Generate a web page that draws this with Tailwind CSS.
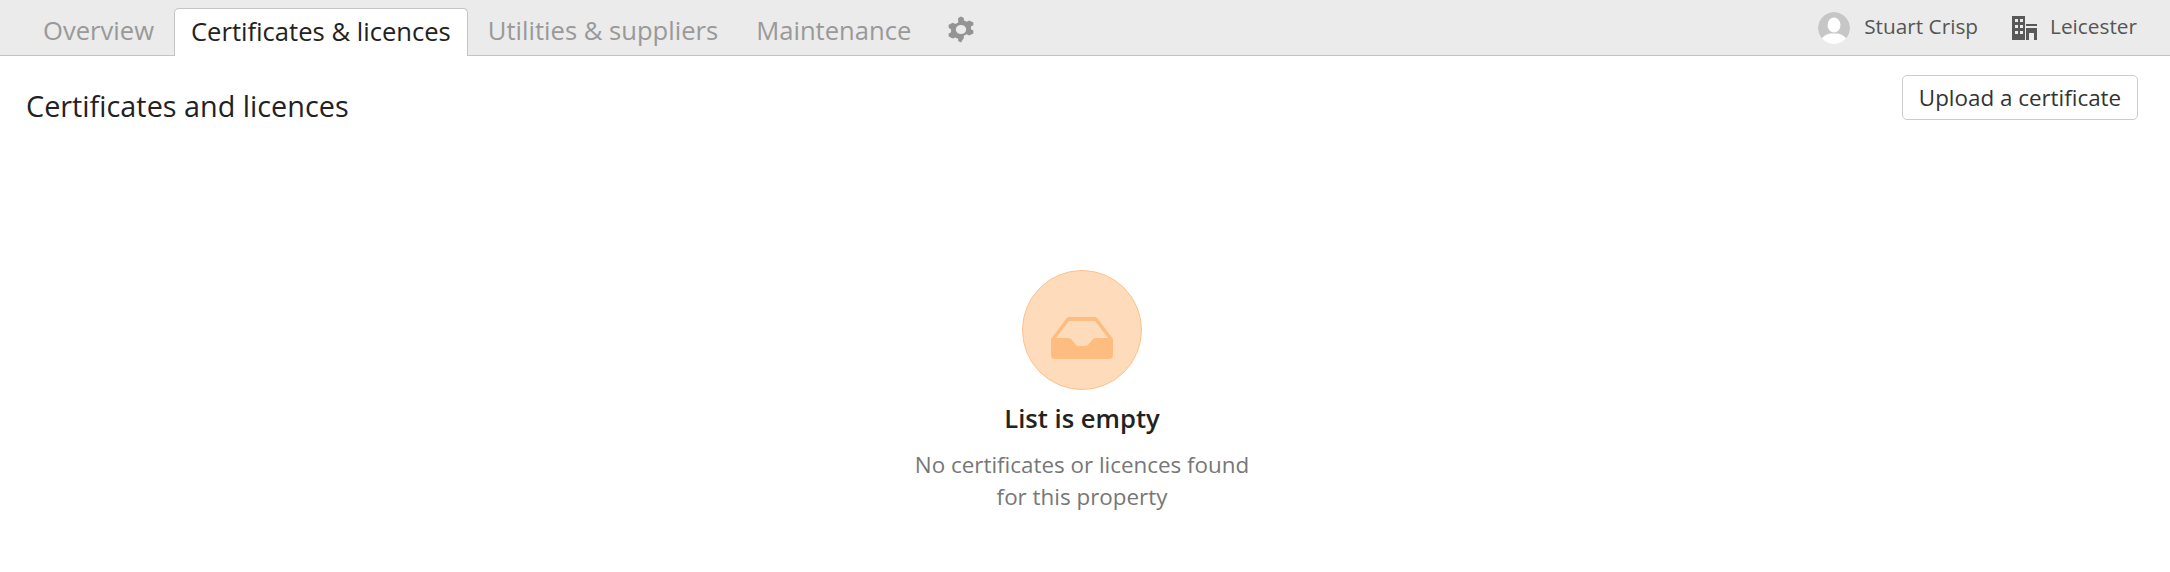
<!DOCTYPE html>
<html lang="en">
<head>
    <meta charset="UTF-8">
    <title>Certificates and licences</title>
    <script src="https://cdn.jsdelivr.net/npm/@tailwindcss/browser@4"></script>
</head>
<body class="h-screen overflow-hidden bg-white font-['Open_Sans',sans-serif] text-[#222]">
    <!-- Top tabs -->
    <header class="h-[56px] bg-[#ebebeb] border-b border-[#c4c4c4] flex justify-between pl-[24px] pr-[33px]">
        <nav class="flex items-end text-[25.6px] leading-[32px] text-[#999]">
            <a class="pl-[19px] pr-[20px] pb-[8px]">Overview</a>
            <a class="h-[48px] -mb-px px-[16px] pt-[7px] bg-white text-[#222] border border-b-0 border-[#c4c4c4] rounded-t-[5px]">Certificates &amp; licences</a>
            <a class="pl-[20px] pr-[19px] pb-[8px]">Utilities &amp; suppliers</a>
            <a class="px-[19px] pb-[8px]">Maintenance</a>
            <svg class="w-[26px] h-[27px] ml-[18px] mb-[12px]" viewBox="2 0 20 24" preserveAspectRatio="none" fill="#949494">
                <path fill-rule="evenodd" d="M12 0.5l2.200 1.300v2.100q1.200.3 2.200 1.100l1.900-1 3.200 1.800v2.500l-1.900 1.100q.2 1.200 0 2.400l1.900 1.100v2.600l-3.200 1.800-1.900-1q-1 .8-2.200 1.100v2.100L12 23.500l-2.200-1.300v-2.100q-1.200-.3-2.200-1.100l-1.900 1-3.200-1.800v-2.600l1.900-1.100q-.2-1.200 0-2.400L2.500 10.400V7.800l3.200-1.800 1.900 1q1-.8 2.200-1.100V1.800zM12 8a4 4 0 1 0 0 8 4 4 0 0 0 0-8z"/>
            </svg>
        </nav>
        <div class="flex items-start pt-[12px] text-[20.8px] leading-[28px] text-[#555]">
            <svg class="w-[32px] h-[32px] rounded-full" viewBox="0 0 32 32">
                <circle cx="16" cy="16" r="16" fill="#c6c6c6"/>
                <ellipse cx="16" cy="13" rx="6.500" ry="7.500" fill="#fff"/>
                <path d="M3 32v-4q2-5 9-6.500h8q7 1.500 9 6.500v4z" fill="#fff"/>
            </svg>
            <span class="ml-[14px]">Stuart Crisp</span>
            <svg class="w-[25px] h-[24px] ml-[34px] mt-[4px]" viewBox="0 0 25 24" fill="#585858">
                <path fill-rule="evenodd" d="M0 0h13v24H0zM3 3v3h3V3zm5 0v3h3V3zM3 9v3h3V9zm5 0v3h3V9zM3 15v3h3v-3zm5 0v3h3v-3z"/>
                <path fill-rule="evenodd" d="M14 8h11v2H14zM14 12h11v12h-3v-7h-5v7h-3z"/>
            </svg>
            <span class="ml-[13px]">Leicester</span>
        </div>
    </header>

    <main class="pl-[26px] pr-[32px]">
        <div class="flex justify-between items-start pt-[19px]">
            <h1 class="text-[28.8px] leading-[38px] pt-[12px] font-normal">Certificates and licences</h1>
            <button class="h-[45px] w-[236px] bg-white border border-[#ccc] rounded-[5px] text-[22.4px] text-[#333]">Upload a certificate</button>
        </div>

        <!-- Empty state -->
        <div class="flex flex-col items-center mt-[145px]">
            <div class="w-[120px] h-[120px] rounded-full bg-[#fedcbb] border border-[#fdc28c] flex items-center justify-center">
                <svg class="w-[62px] h-[42px] mt-[16px]" viewBox="0 0 62 42" fill="#fdbd80">
                    <path d="M0 22L15 2Q16 0 18 0H44Q46 0 47 2L62 22V38Q62 42 58 42H4Q0 42 0 38z M5 21H17Q19 21 20 22L25 28Q26 29 28 29H34Q36 29 37 28L42 22Q43 21 45 21H57L44 4H18z" fill-rule="evenodd"/>
                </svg>
            </div>
            <h2 class="mt-[13px] text-[25.6px] leading-[32px] font-semibold">List is empty</h2>
            <p class="mt-[14px] text-[22.4px] leading-[32px] text-[#777] text-center">No certificates or licences found<br>for this property</p>
        </div>
    </main>
</body>
</html>
